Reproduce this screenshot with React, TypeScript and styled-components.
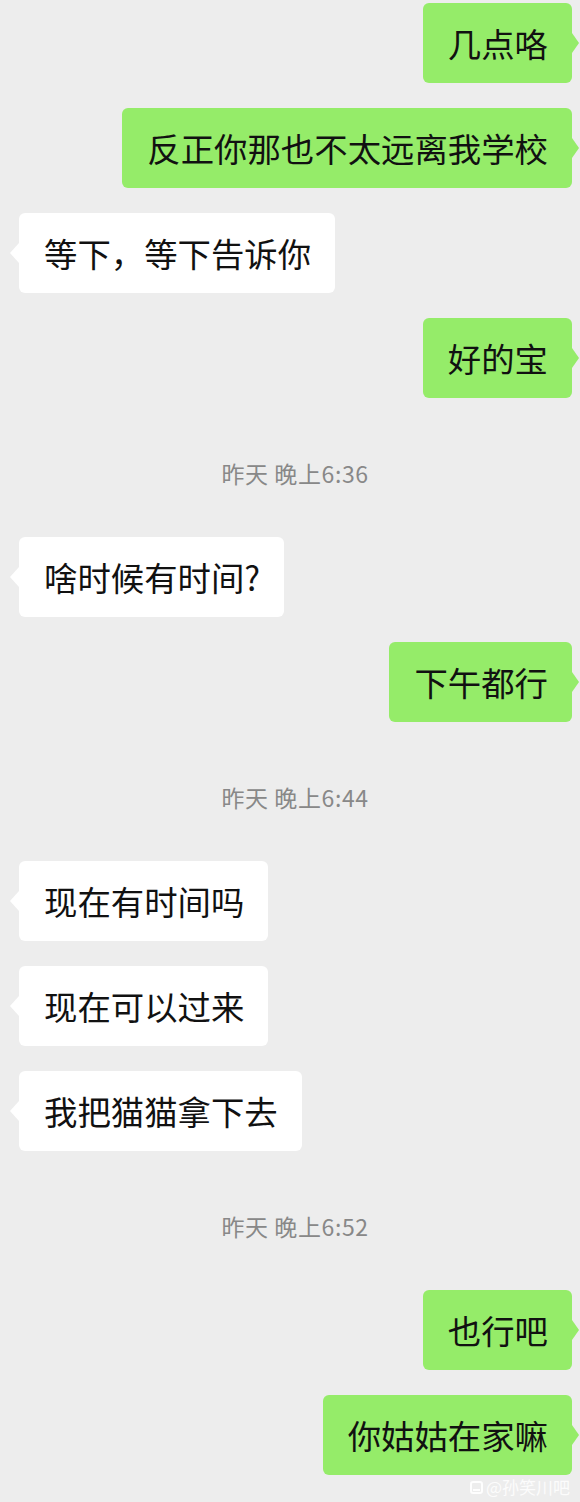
import React from 'react';
import styled, { createGlobalStyle } from 'styled-components';

const GlobalStyle = createGlobalStyle`
  html, body {
    margin: 0;
    padding: 0;
    background: #ededed;
  }
  body {
    font-family: "Noto Sans CJK SC", "Noto Sans", sans-serif;
  }
`;

const ChatWrapper = styled.div`
  position: relative;
  width: 580px;
  height: 1502px;
  box-sizing: border-box;
  padding-top: 3px;
  background: #ededed;
  display: flex;
  flex-direction: column;
  gap: 25px;
  overflow: hidden;
`;

const Row = styled.div<{ $mine: boolean }>`
  display: flex;
  justify-content: ${props => (props.$mine ? 'flex-end' : 'flex-start')};
  padding: ${props => (props.$mine ? '0 8px 0 0' : '0 0 0 19px')};
`;

const Bubble = styled.div<{ $mine: boolean }>`
  position: relative;
  height: 80px;
  box-sizing: border-box;
  padding: 22px 24px 22px 25px;
  border-radius: 6px;
  background: ${props => (props.$mine ? '#95ec69' : '#ffffff')};
  color: #111111;
  font-size: 33.4px;
  line-height: 36px;
  white-space: nowrap;

  &::after {
    content: '';
    position: absolute;
    top: 30px;
    ${props => (props.$mine ? 'right: -7px;' : 'left: -9px;')}
    border-top: 10px solid transparent;
    border-bottom: 10px solid transparent;
    ${props =>
      props.$mine
        ? 'border-left: 7px solid #95ec69;'
        : 'border-right: 9px solid #ffffff;'}
  }
`;

const Time = styled.div`
  padding: 38px 0 27px 10px;
  text-align: center;
  font-size: 23px;
  line-height: 24px;
  letter-spacing: 0.6px;
  color: #888888;
`;

const Watermark = styled.div`
  position: absolute;
  right: 10px;
  bottom: 5px;
  display: flex;
  align-items: center;
  gap: 3px;
  font-size: 17px;
  line-height: 20px;
  color: rgba(255, 255, 255, 0.85);
`;

const WatermarkIcon = styled.span`
  position: relative;
  width: 9px;
  height: 9px;
  border: 2px solid rgba(255, 255, 255, 0.9);
  border-radius: 3px;
  display: inline-block;

  &::after {
    content: '';
    position: absolute;
    left: 1px;
    right: 1px;
    bottom: 1px;
    height: 2px;
    background: rgba(255, 255, 255, 0.9);
  }
`;

type Item =
  | { kind: 'msg'; mine: boolean; text: string }
  | { kind: 'time'; text: string };

const items: Item[] = [
  { kind: 'msg', mine: true, text: '几点咯' },
  { kind: 'msg', mine: true, text: '反正你那也不太远离我学校' },
  { kind: 'msg', mine: false, text: '等下，等下告诉你' },
  { kind: 'msg', mine: true, text: '好的宝' },
  { kind: 'time', text: '昨天 晚上6:36' },
  { kind: 'msg', mine: false, text: '啥时候有时间?' },
  { kind: 'msg', mine: true, text: '下午都行' },
  { kind: 'time', text: '昨天 晚上6:44' },
  { kind: 'msg', mine: false, text: '现在有时间吗' },
  { kind: 'msg', mine: false, text: '现在可以过来' },
  { kind: 'msg', mine: false, text: '我把猫猫拿下去' },
  { kind: 'time', text: '昨天 晚上6:52' },
  { kind: 'msg', mine: true, text: '也行吧' },
  { kind: 'msg', mine: true, text: '你姑姑在家嘛' },
];

function App() {
  return (
    <>
      <GlobalStyle />
      <ChatWrapper>
        {items.map((item, i) =>
          item.kind === 'time' ? (
            <Time key={i}>{item.text}</Time>
          ) : (
            <Row key={i} $mine={item.mine}>
              <Bubble $mine={item.mine}>{item.text}</Bubble>
            </Row>
          )
        )}
        <Watermark>
          <WatermarkIcon />
          <span>@孙笑川吧</span>
        </Watermark>
      </ChatWrapper>
    </>
  );
}

export default App;
